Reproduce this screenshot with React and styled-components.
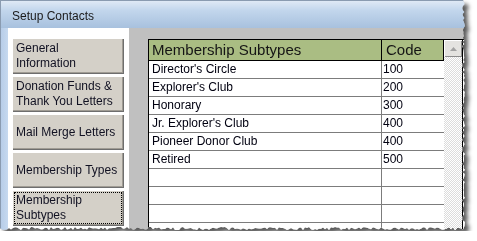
import React from "react";
import styled, { createGlobalStyle } from "styled-components";

const GlobalStyle = createGlobalStyle`
  html, body {
    margin: 0;
    padding: 0;
    background: #ffffff;
  }
  body {
    font-family: "Liberation Sans", Arial, sans-serif;
  }
`;

const Shadow = styled.div`
  width: 466px;
  filter: drop-shadow(4px 4px 2px rgba(0, 0, 0, 0.65));
`;

const Window = styled.div`
  width: 466px;
  height: 231px;
  display: flex;
  flex-direction: column;
  background: #c0c0c0;
  overflow: hidden;
  border-top: 1px solid #8a9bb0;
  border-left: 1px solid #8a9bb0;
  box-sizing: border-box;
`;

const TitleBar = styled.div`
  height: 27px;
  flex: none;
  display: flex;
  align-items: center;
  padding: 3px 0 0 11px;
  box-sizing: border-box;
  background: linear-gradient(180deg, #dfe9f5 0%, #c2d6ec 35%, #a8c1de 100%);
  color: #1b1b1b;
  font-size: 12px;
`;

const Body = styled.div`
  flex: 1;
  display: flex;
  min-height: 0;
`;

const Frame = styled.div`
  width: 7px;
  flex: none;
  background: linear-gradient(90deg, #b7cde8, #c6d9ef);
`;

const Sidebar = styled.div`
  width: 121px;
  flex: none;
  background: #ffffff;
  padding: 10px 5px 0 4px;
  box-sizing: border-box;
  display: flex;
  flex-direction: column;
  gap: 2px;
`;

const NavButton = styled.div`
  height: 36px;
  flex: none;
  box-sizing: border-box;
  background: #d4d0c8;
  box-shadow: inset 1px 1px #ffffff, inset -1px -1px #6e6e6e, inset -2px -2px #a09c94;
  display: flex;
  align-items: center;
  padding: ${(p) => (p.$active ? "2px" : "0 4px")};
  font-size: 12px;
  line-height: 15px;
  color: #111122;
`;

const Focus = styled.div`
  flex: 1;
  align-self: stretch;
  display: flex;
  align-items: center;
  padding: 0 1px;
  border: 1px dotted #000000;
`;

const Content = styled.div`
  flex: 1;
  background: #c0c0c0;
  padding: 11px 0 0 19px;
  min-width: 0;
`;

const Grid = styled.div`
  display: flex;
  background: #ffffff;
  border-top: 1px solid #000000;
  border-left: 1px solid #000000;
  height: 100%;
`;

const Table = styled.div`
  width: 295px;
  flex: none;
  display: flex;
  flex-direction: column;
`;

const HeaderRow = styled.div`
  display: flex;
  height: 21px;
  flex: none;
  background: #aabd83;
  border-bottom: 1px solid #000000;
  box-sizing: border-box;
`;

const HeaderCell = styled.div`
  width: ${(p) => p.$w}px;
  box-sizing: border-box;
  padding-left: ${(p) => p.$pad}px;
  font-size: 15px;
  line-height: 20px;
  color: #151515;
  border-right: 1px solid #000000;
`;

const Row = styled.div`
  display: flex;
  height: 18px;
  flex: none;
  border-bottom: 1px solid #7c7c7c;
  box-sizing: border-box;
`;

const Cell = styled.div`
  width: ${(p) => p.$w}px;
  box-sizing: border-box;
  padding-left: ${(p) => p.$pad}px;
  font-size: 12px;
  line-height: 17px;
  color: #000010;
  border-right: 1px solid ${(p) => (p.$last ? "transparent" : "#7c7c7c")};
`;

const ScrollBar = styled.div`
  width: 18px;
  flex: none;
  display: flex;
  flex-direction: column;
  border-right: 1px solid #000000;
  background-color: #ffffff;
  background-image: repeating-conic-gradient(#dcdcdc 0 25%, #ffffff 0 50%);
  background-size: 2px 2px;
`;

const ArrowButton = styled.div`
  height: 17px;
  flex: none;
  background: #e4e3e0;
  box-shadow: inset 1px 1px #ffffff, inset -1px -1px #8c8c8c;
  display: flex;
  align-items: center;
  justify-content: center;
`;

const navItems = [
  "General Information",
  "Donation Funds & Thank You Letters",
  "Mail Merge Letters",
  "Membership Types",
  "Membership Subtypes",
];

const rows = [
  ["Director's Circle", "100"],
  ["Explorer's Club", "200"],
  ["Honorary", "300"],
  ["Jr. Explorer's Club", "400"],
  ["Pioneer Donor Club", "400"],
  ["Retired", "500"],
  ["", ""],
  ["", ""],
  ["", ""],
  ["", ""],
];

// ragged torn edge along the right and bottom sides
function tornClip(w, h) {
  let seed = 11;
  const rand = () => {
    seed = (seed * 9301 + 49297) % 233280;
    return seed / 233280;
  };
  const pts = ["0px 0px", `${w - 3}px 0px`];
  for (let y = 2; y < h - 3; y += 2) {
    pts.push(`${(w - 4 + rand() * 3).toFixed(1)}px ${y}px`);
  }
  for (let x = w - 3; x > 0; x -= 2) {
    pts.push(`${x}px ${(h - 4 + rand() * 3).toFixed(1)}px`);
  }
  pts.push(`0px ${h - 3}px`);
  return `polygon(${pts.join(", ")})`;
}

export default function App() {
  return (
    <>
      <GlobalStyle />
      <Shadow>
        <Window style={{ clipPath: tornClip(466, 231) }}>
          <TitleBar>Setup Contacts</TitleBar>
          <Body>
            <Frame />
            <Sidebar>
              {navItems.map((label, i) =>
                i === navItems.length - 1 ? (
                  <NavButton key={label} $active>
                    <Focus>{label}</Focus>
                  </NavButton>
                ) : (
                  <NavButton key={label}>{label}</NavButton>
                )
              )}
            </Sidebar>
            <Content>
              <Grid>
                <Table>
                  <HeaderRow>
                    <HeaderCell $w={233} $pad={3}>Membership Subtypes</HeaderCell>
                    <HeaderCell $w={62} $pad={4}>Code</HeaderCell>
                  </HeaderRow>
                  {rows.map(([name, code], i) => (
                    <Row key={i}>
                      <Cell $w={233} $pad={3}>{name}</Cell>
                      <Cell $w={62} $pad={1} $last>{code}</Cell>
                    </Row>
                  ))}
                </Table>
                <ScrollBar>
                  <ArrowButton>
                    <svg width="7" height="4" viewBox="0 0 7 4">
                      <path d="M0 4 L3.5 0 L7 4 Z" fill="#a3a3a3" />
                    </svg>
                  </ArrowButton>
                </ScrollBar>
              </Grid>
            </Content>
          </Body>
        </Window>
      </Shadow>
    </>
  );
}
